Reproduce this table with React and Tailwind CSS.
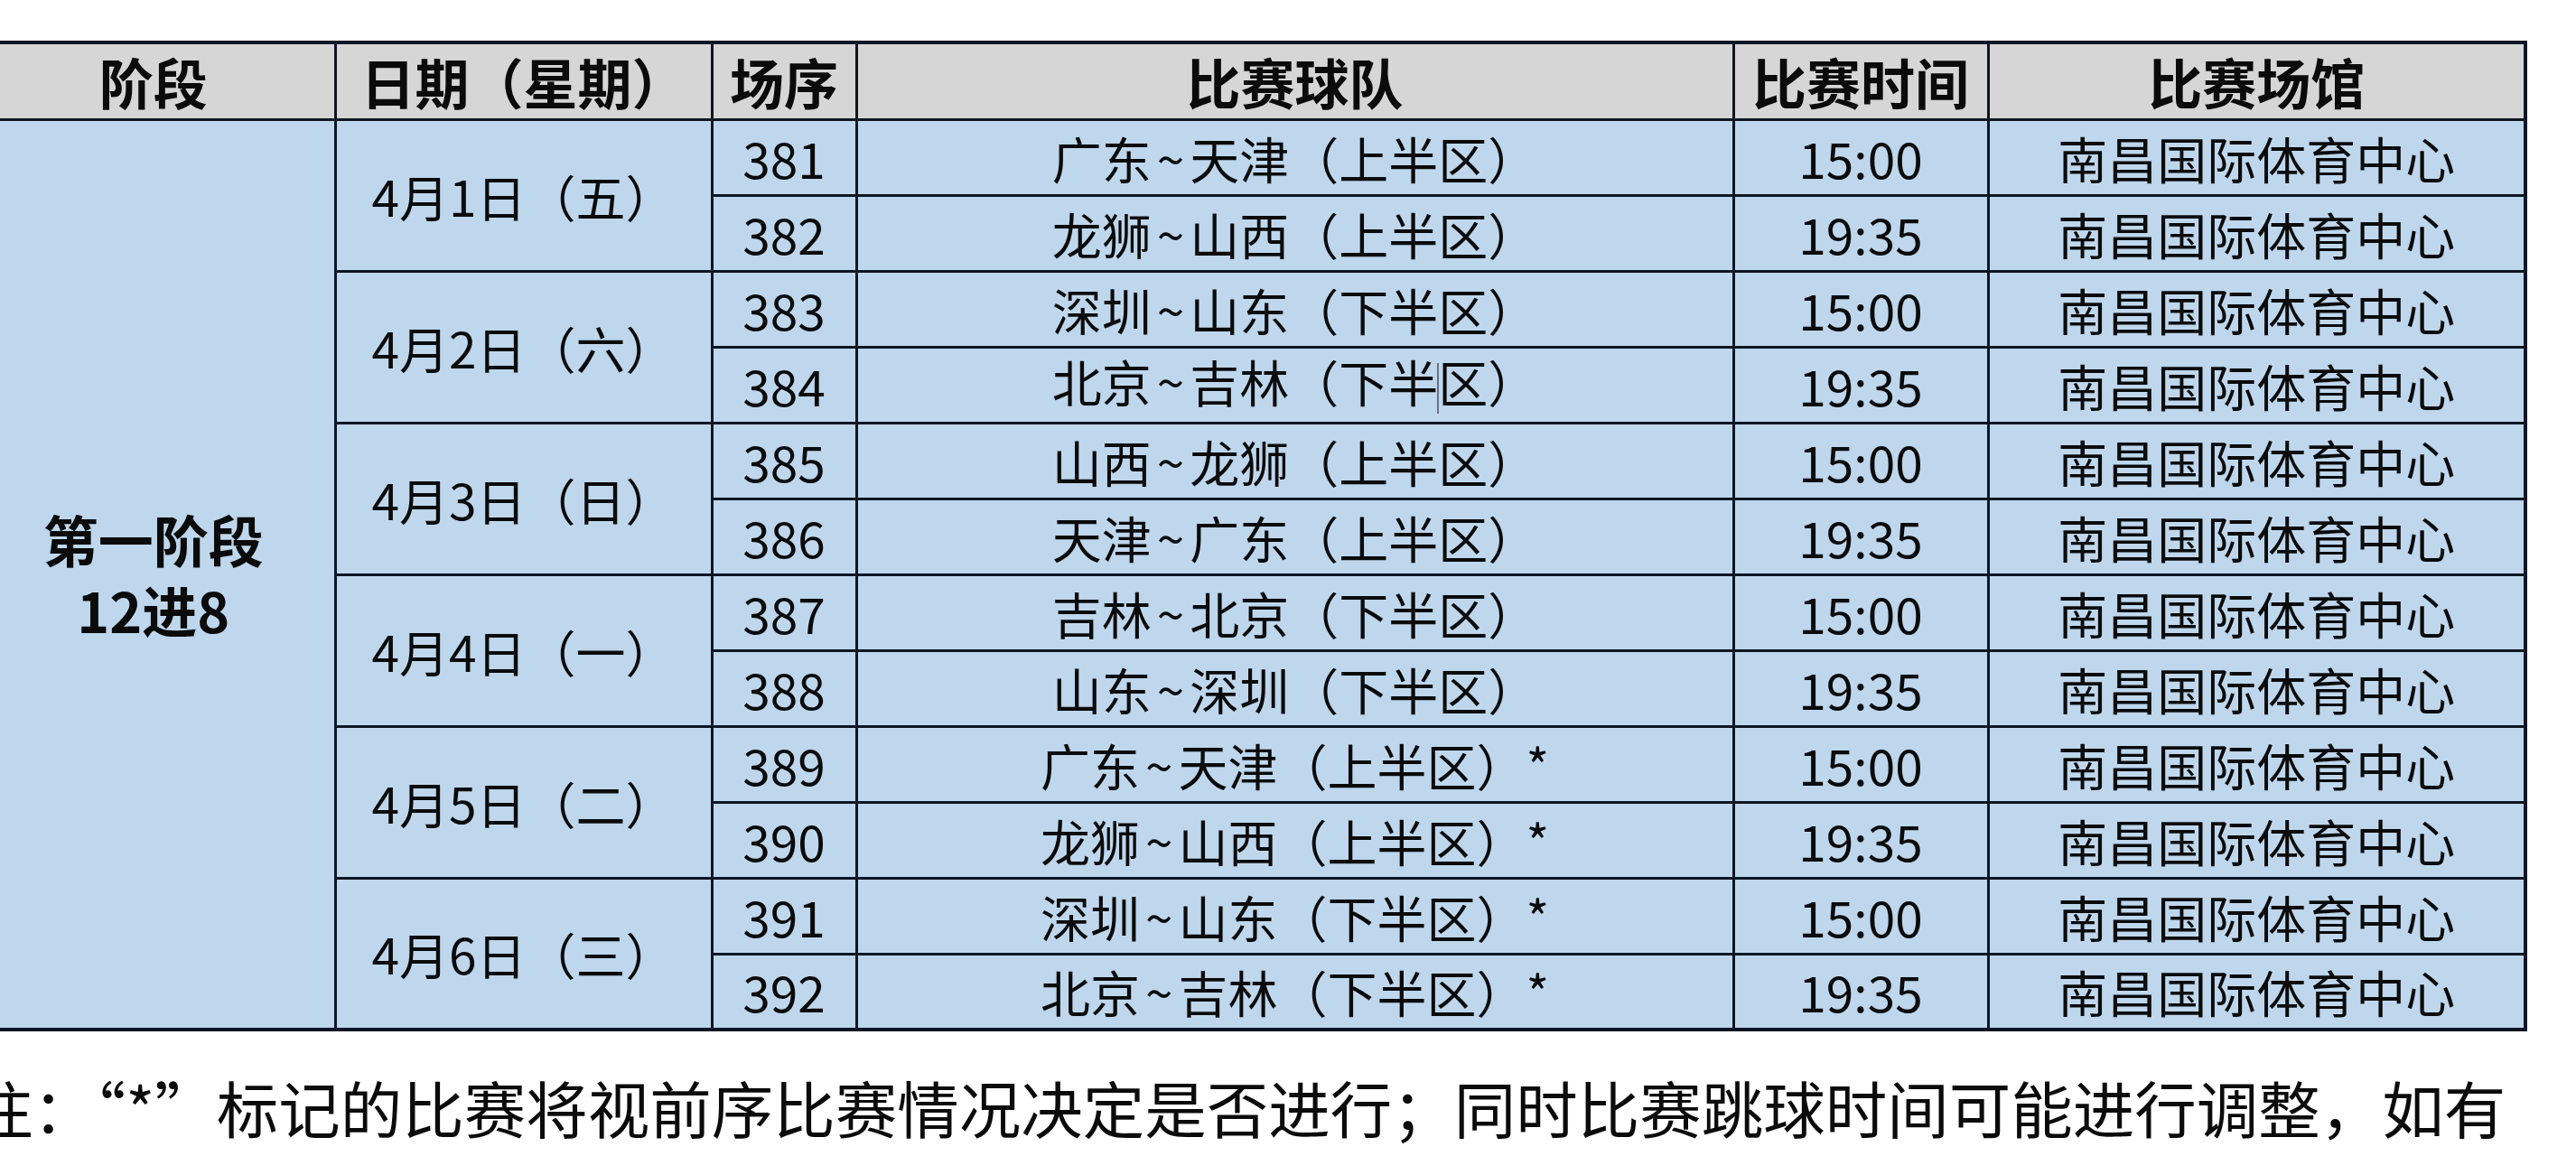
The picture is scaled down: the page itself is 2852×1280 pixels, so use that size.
import React from 'react';

const VENUE = '南昌国际体育中心';

const days = [
  { date: '4月1日（五）', games: [['381', '广东~天津（上半区）', '15:00'], ['382', '龙狮~山西（上半区）', '19:35']] },
  { date: '4月2日（六）', games: [['383', '深圳~山东（下半区）', '15:00'], ['384', '北京~吉林（下半区）', '19:35', true]] },
  { date: '4月3日（日）', games: [['385', '山西~龙狮（上半区）', '15:00'], ['386', '天津~广东（上半区）', '19:35']] },
  { date: '4月4日（一）', games: [['387', '吉林~北京（下半区）', '15:00'], ['388', '山东~深圳（下半区）', '19:35']] },
  { date: '4月5日（二）', games: [['389', '广东~天津（上半区）*', '15:00'], ['390', '龙狮~山西（上半区）*', '19:35']] },
  { date: '4月6日（三）', games: [['391', '深圳~山东（下半区）*', '15:00'], ['392', '北京~吉林（下半区）*', '19:35']] },
];

const cell = 'border-[3px] border-[#0e1624] p-0 text-center align-middle';

function Teams({ text, caret }) {
  const [home, rest] = text.split('~');
  // a text caret sits between 半 and 区 in one row of the screenshot
  const i = rest.indexOf('区');
  return (
    <>
      {home}
      <span className="mx-[6px]">~</span>
      {caret ? (
        <>
          {rest.slice(0, i)}
          <span className="inline-block w-[2px] h-[56px] -mx-[1px] align-middle bg-[#6b7280]" />
          {rest.slice(i)}
        </>
      ) : (
        rest
      )}
    </>
  );
}

export default function App() {
  return (
    <div className="w-[2852px] h-[1280px] overflow-hidden bg-white text-[#0b0b0b] font-['Noto_Sans_CJK_SC','Microsoft_YaHei',sans-serif]">
      <div className="pt-[45px] -ml-[34px]">
        <table className="table-fixed border-collapse border-[4px] border-[#0e1624] w-[2828px] leading-none">
          <colgroup>
            <col className="w-[403px]" />
            <col className="w-[417px]" />
            <col className="w-[160px]" />
            <col className="w-[971px]" />
            <col className="w-[282px]" />
            <col className="w-[595px]" />
          </colgroup>
          <thead>
            <tr className="h-[85px] bg-[#d6d6d6] text-[60px] font-bold">
              <th className={cell}>阶段</th>
              <th className={cell}>日期（星期）</th>
              <th className={cell}>场序</th>
              <th className={cell}>比赛球队</th>
              <th className={cell}>比赛时间</th>
              <th className={cell}>比赛场馆</th>
            </tr>
          </thead>
          <tbody className="bg-[#bed7ed] text-[55px]">
            {days.map((d, di) =>
              d.games.map(([no, teams, time, caret], gi) => (
                <tr key={no} className="h-[84px]">
                  {di === 0 && gi === 0 && (
                    <td rowSpan={12} className={`${cell} text-[61px] font-bold`}>
                      <div className="leading-[78px]">
                        <div>第一阶段</div>
                        <div>12进8</div>
                      </div>
                    </td>
                  )}
                  {gi === 0 && (
                    <td rowSpan={2} className={cell}>
                      {d.date}
                    </td>
                  )}
                  <td className={cell}>{no}</td>
                  <td className={cell}>
                    <Teams text={teams} caret={caret} />
                  </td>
                  <td className={cell}>{time}</td>
                  <td className={cell}>{VENUE}</td>
                </tr>
              ))
            )}
          </tbody>
        </table>
        <p className="mt-[50px] ml-[2px] whitespace-nowrap text-[68.5px] leading-none">
          注：“*”标记的比赛将视前序比赛情况决定是否进行；同时比赛跳球时间可能进行调整，如有
        </p>
      </div>
    </div>
  );
}
